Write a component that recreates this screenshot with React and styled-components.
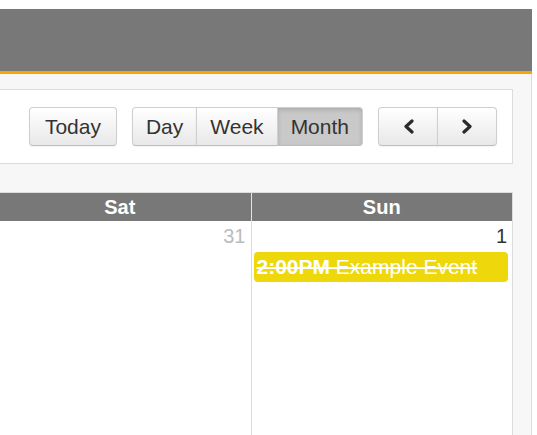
import React from "react";
import styled, { createGlobalStyle } from "styled-components";

const GlobalStyle = createGlobalStyle`
  html, body {
    margin: 0;
    padding: 0;
    background: #fff;
    font-family: "Liberation Sans", Arial, Helvetica, sans-serif;
    overflow: hidden;
  }
`;

export default function App() {
  return (
    <>
      <GlobalStyle />
      <Page>
        {/* Site header with orange underline */}
        <TopBar />
        <Panel>
          {/* Calendar toolbar */}
          <Toolbar>
            <Button>Today</Button>
            <Group>
              <Button grouped>Day</Button>
              <Button grouped>Week</Button>
              <Button grouped active>Month</Button>
            </Group>
            <Group>
              <Button grouped wide aria-label="prev">
                <Chevron dir="left" />
              </Button>
              <Button grouped wide aria-label="next">
                <Chevron dir="right" />
              </Button>
            </Group>
          </Toolbar>

          {/* Month grid, cropped to the last two days */}
          <Calendar>
            <HeadCell>Sat</HeadCell>
            <HeadCell>Sun</HeadCell>
            <DayCell>
              <DayNumber other>31</DayNumber>
            </DayCell>
            <DayCell>
              <DayNumber>1</DayNumber>
              <Event>
                <EventTime>2:00PM</EventTime> Example Event
              </Event>
            </DayCell>
          </Calendar>
        </Panel>
      </Page>
    </>
  );
}

function Chevron({ dir }) {
  const d = dir === "left" ? "M9 2 L3 7.5 L9 13" : "M2 2 L8 7.5 L2 13";
  return (
    <svg width="11" height="15" viewBox="0 0 11 15">
      <path
        d={d}
        fill="none"
        stroke="#2b2b2b"
        strokeWidth="3.2"
        strokeLinecap="round"
        strokeLinejoin="round"
      />
    </svg>
  );
}

const Page = styled.div`
  width: 532px;
  height: 435px;
  padding-top: 9px;
  box-sizing: border-box;
  display: flex;
  flex-direction: column;
  overflow: hidden;
`;

const TopBar = styled.header`
  height: 62px;
  flex-shrink: 0;
  background: #787878;
  border-bottom: 3px solid #f7a800;
`;

const Panel = styled.main`
  flex: 1;
  background: #f7f7f7;
  border-right: 1px solid #dcdcdc;
  padding: 15px 18px 0 0;
  display: flex;
  flex-direction: column;
  align-items: flex-end;
`;

const Toolbar = styled.div`
  display: flex;
  justify-content: flex-end;
  gap: 15px;
  width: 560px;
  padding: 17px 15px 17px 0;
  background: #fff;
  border: 1px solid #dcdcdc;
`;

const Group = styled.div`
  display: flex;
`;

const Button = styled.button`
  height: 39px;
  padding: 0 ${(p) => (p.wide ? "0" : p.grouped ? "13px" : "15px")};
  width: ${(p) => (p.wide ? "60px" : "auto")};
  display: flex;
  align-items: center;
  justify-content: center;
  font-family: "Liberation Sans", Arial, sans-serif;
  font-size: 21px;
  color: #333;
  border: 1px solid #cfcfcf;
  border-bottom-color: #bdbdbd;
  border-radius: 4px;
  background: ${(p) =>
    p.active ? "#c9c9c9" : "linear-gradient(#ffffff, #e8e8e8)"};
  box-shadow: ${(p) =>
    p.active
      ? "inset 0 2px 4px rgba(0,0,0,0.15)"
      : "inset 0 1px 0 rgba(255,255,255,0.3), 0 1px 2px rgba(0,0,0,0.05)"};
  cursor: pointer;

  ${(p) =>
    p.grouped &&
    `
    border-radius: 0;
    & + & { margin-left: -1px; }
    &:first-child { border-radius: 4px 0 0 4px; }
    &:last-child { border-radius: 0 4px 4px 0; }
  `}
`;

const Calendar = styled.div`
  margin-top: 28px;
  width: 523px;
  flex: 1;
  display: grid;
  grid-template-columns: 1fr 1fr;
  grid-template-rows: 28px 1fr;
  border: 1px solid #dcdcdc;
  border-bottom: none;
  background: #fff;
`;

const HeadCell = styled.div`
  background: #787878;
  color: #fff;
  font-weight: bold;
  font-size: 20px;
  line-height: 28px;
  text-align: center;
  & + & {
    border-left: 1px solid #e4e4e4;
  }
`;

const DayCell = styled.div`
  display: flex;
  flex-direction: column;
  padding: 3px 4px 0 2px;
  & + & {
    border-left: 1px solid #dcdcdc;
  }
`;

const DayNumber = styled.div`
  text-align: right;
  font-size: 20px;
  line-height: 24px;
  padding-right: 1px;
  color: ${(p) => (p.other ? "#bbb" : "#333")};
`;

const Event = styled.div`
  margin-top: 4px;
  height: 30px;
  line-height: 30px;
  padding: 0 3px;
  background: #eed80c;
  border-radius: 4px;
  color: #fff;
  font-size: 21px;
  text-decoration: line-through;
  white-space: nowrap;
  overflow: hidden;
`;

const EventTime = styled.span`
  font-weight: bold;
`;
